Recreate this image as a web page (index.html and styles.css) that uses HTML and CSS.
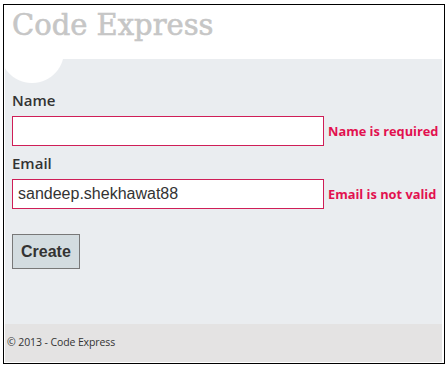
FILE: index.html
```html
<!DOCTYPE html>
<html>
<head>
<meta charset="utf-8">
<title>Code Express</title>
<link rel="stylesheet" href="styles.css">
</head>
<body>
<div class="frame">
  <header class="site-header">
    <p class="site-title">Code Express</p>
  </header>
  <main class="main-content">
    <form class="form">
      <label class="field-label">Name</label>
      <div class="field-row">
        <input class="field-input" type="text" value="">
        <span class="field-error">Name is required</span>
      </div>
      <label class="field-label field-label-next">Email</label>
      <div class="field-row">
        <input class="field-input" type="text" value="sandeep.shekhawat88">
        <span class="field-error">Email is not valid</span>
      </div>
      <button class="submit" type="button">Create</button>
    </form>
  </main>
  <footer class="site-footer">
    <p class="copyright">© 2013 - Code Express</p>
  </footer>
</div>
</body>
</html>
```

FILE: styles.css
```css
* { box-sizing: border-box; }

html, body {
  margin: 0;
  padding: 0;
  background: #ffffff;
}

.frame {
  margin: 4px 0 0 3px;
  width: 442px;
  height: 360px;
  border: 1px solid #000000;
  padding: 0 2px 1px 1px;
  display: flex;
  flex-direction: column;
  background: #ffffff;
}

.site-header {
  height: 54px;
  flex: none;
  background: #ffffff;
}

.site-title {
  margin: 0;
  padding: 3px 0 0 7px;
  font-family: "DejaVu Serif", serif;
  font-size: 29px;
  line-height: 34px;
  color: #c6c6c6;
  -webkit-text-stroke: 0.6px #c6c6c6;
  white-space: nowrap;
}

.main-content {
  height: 265px;
  flex: none;
  padding: 31px 0 0 7px;
  background:
    radial-gradient(circle at 27px -8px, #ffffff 31.5px, rgba(255,255,255,0) 32.5px),
    #eaedf0;
}

.form {
  display: flex;
  flex-direction: column;
  align-items: flex-start;
}

.field-label {
  display: block;
  font-family: "Open Sans", sans-serif;
  font-weight: 600;
  font-size: 15px;
  line-height: 20px;
  color: #333333;
  margin-bottom: 6px;
}

.field-label-next {
  margin-top: 7px;
}

.field-row {
  display: flex;
  align-items: center;
  gap: 4px;
}

.field-input {
  width: 312px;
  height: 30px;
  margin: 0;
  padding: 0 5px;
  border: 1px solid #cf1e57;
  background: #ffffff;
  font-family: "Liberation Sans", Arial, sans-serif;
  font-size: 16px;
  color: #333333;
  outline: none;
}

.field-error {
  font-family: "Open Sans", sans-serif;
  font-weight: 700;
  font-size: 12.8px;
  color: #e2114f;
  white-space: nowrap;
}

.submit {
  margin-top: 25px;
  padding: 7px 8px;
  height: 35px;
  border: 1px solid #787878;
  background: #d3dce0;
  font-family: "Liberation Sans", Arial, sans-serif;
  font-weight: 700;
  font-size: 16px;
  line-height: 19px;
  color: #333333;
}

.site-footer {
  height: 38px;
  flex: none;
  display: flex;
  align-items: center;
  padding-left: 2px;
  padding-bottom: 2px;
  background: #e4e3e3;
}

.copyright {
  margin: 0;
  font-family: "Open Sans", sans-serif;
  font-size: 10.5px;
  letter-spacing: -0.1px;
  color: #333333;
}
```
